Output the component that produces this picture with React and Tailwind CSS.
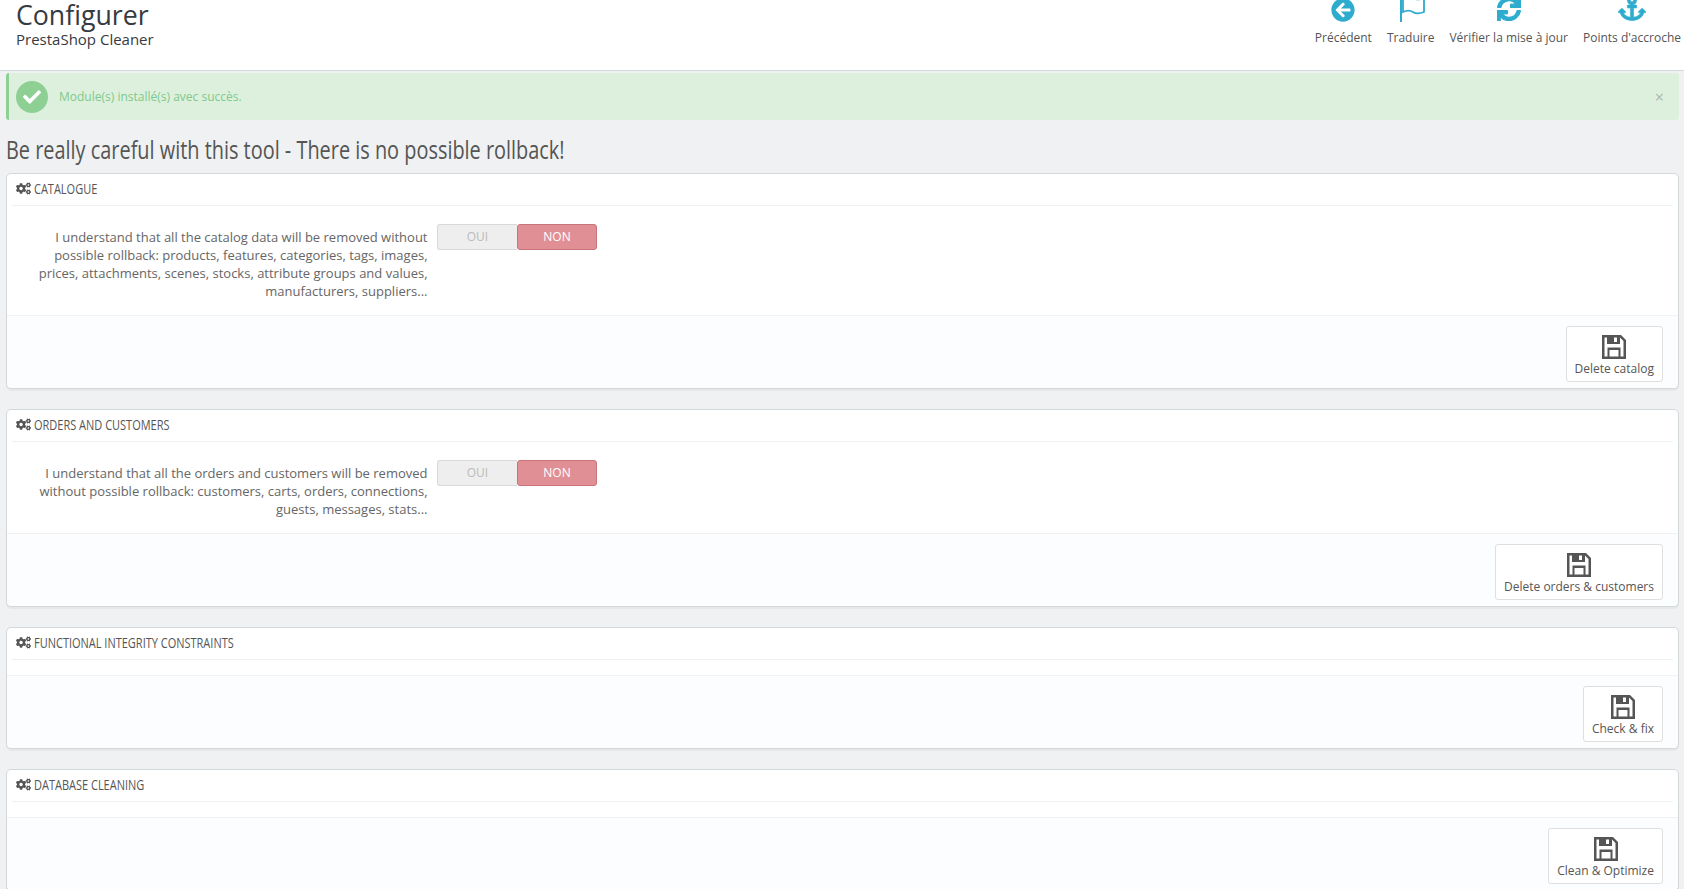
import { FaArrowCircleLeft, FaSync, FaAnchor, FaCogs, FaCheck } from 'react-icons/fa';

const sans = '[font-family:"Open_Sans",sans-serif]';

// floppy disk as in the toolbar buttons
const SaveIcon = () => (
  <svg width="26" height="26" viewBox="0 0 26 26" className="block text-[#555]">
    <path fillRule="evenodd" fill="currentColor" d="M1 1h19l5 5v19H1zM3.500 3.500v19h3v-9h13v9h3V7l-3.500-3.500V10H6V3.500zM8.500 16v6.500h9V16zM13 3.500V8h3V3.500z" />
  </svg>
);

const FlagIcon = () => (
  <svg width="28" height="28" viewBox="0 0 28 28" className="block text-[#2eacce] ml-[2px] -mr-[2px]">
    <path fill="currentColor" d="M1 1h2v27H1z" />
    <path fill="none" stroke="currentColor" strokeWidth="1.800" d="M4 4c4-2 7-2 10 0s6 2 11 0v14c-5 2-8 2-11 0s-6-2-10 0z" />
  </svg>
);

const ToolbarItem = ({ icon, label }) => (
  <div className="flex flex-col items-center text-[#555]">
    <div className="h-[27px] flex items-end text-[#2eacce]">{icon}</div>
    <span className="mt-[7px] text-[12px] leading-[18px] whitespace-nowrap">{label}</span>
  </div>
);

const Toggle = () => (
  <div className="flex w-[160px] h-[26px] shrink-0 text-[12px]">
    <div className="w-[80px] flex items-center justify-center bg-[#eeeeee] border border-[#d9d9d9] border-r-0 rounded-l-[3px] text-[#bbbbbb]">OUI</div>
    <div className="w-[80px] flex items-center justify-center bg-[#e08f95] border border-[#c9747b] rounded-[3px] text-white font-medium">NON</div>
  </div>
);

const Panel = ({ title, text, button }) => (
  <section className="mb-[20px] bg-white border border-[#d3d8db] rounded-[5px] shadow-[0_2px_0_rgba(0,0,0,0.04)]">
    <div className="mx-[5px] h-[32px] pb-[2px] flex items-center gap-[3px] px-[4px] border-b border-[#eff1f2] text-[#555]">
      <FaCogs className="text-[15px] shrink-0" />
      <h3 className="w-[300px] shrink-0 origin-left scale-x-[0.785] text-[14px] uppercase whitespace-nowrap">{title}</h3>
    </div>
    {text ? (
      <div className="pt-[18px] pb-[15px] flex items-start border-b border-[#eff1f2]">
        <p className="w-[421px] pl-[20px] pr-[0.5px] pt-[4px] text-right text-[13px] leading-[18px] text-[#666]">{text}</p>
        <div className="ml-[9px]"><Toggle /></div>
      </div>
    ) : (
      <div className="h-[16px] border-b border-[#eff1f2]" />
    )}
    <div className="h-[72px] pt-[10px] pr-[15px] flex justify-end bg-[#fcfdfe] rounded-b-[5px]">
      <button className="h-[56px] px-[8px] pt-[2px] flex flex-col items-center justify-center bg-white border border-[#dfdfdf] rounded-[3px] text-[12px] text-[#555]">
        <SaveIcon />
        <span className="leading-[16px] mt-[1px]">{button}</span>
      </button>
    </div>
  </section>
);

export default function App() {
  return (
    <div className={`${sans} h-[889px] overflow-hidden bg-[#eff1f2]`}>
      {/* Page head, scrolled a little out of view at the top */}
      <header className="h-[71px] bg-white border-b border-[#d3d8db] flex justify-between overflow-hidden">
        <div className="pl-[16px] pt-[1px] text-[#363a41]">
          <h1 className="text-[26.7px] leading-[28px]">Configurer</h1>
          <p className="text-[15px] leading-[20px]">PrestaShop Cleaner</p>
        </div>
        <div className="flex gap-[15px] pr-[3px] -mt-[5px]">
          <ToolbarItem label="Précédent" icon={<FaArrowCircleLeft size={24} />} />
          <ToolbarItem label="Traduire" icon={<FlagIcon />} />
          <ToolbarItem label="Vérifier la mise à jour" icon={<FaSync size={24} stroke="currentColor" strokeWidth={24} className="-translate-y-[1px]" />} />
          <ToolbarItem label="Points d'accroche" icon={<FaAnchor size={28} stroke="currentColor" strokeWidth={12} />} />
        </div>
      </header>

      <main className="pl-[6px] pr-[5px] pt-[2px]">
        <div className="h-[47px] flex items-center bg-[#ddf0de] border-l-[3px] border-[#8ed094] rounded-[3px] text-[#7fc98a] text-[12px]">
          <span className="ml-[7px] w-[32px] h-[32px] rounded-full bg-[#8ed094] flex items-center justify-center text-white">
            <FaCheck size={18} />
          </span>
          <span className="ml-[11px] flex-1">Module(s) installé(s) avec succès.</span>
          <span className="mr-[15px] text-[16px] leading-none text-[#a9b8ab]">×</span>
        </div>

        <h2 className="mt-[14px] mb-[9px] w-[700px] origin-left scale-x-[0.796] text-[25px] font-medium leading-[30px] text-[#555] whitespace-nowrap">
          Be really careful with this tool - There is no possible rollback!
        </h2>

        <Panel
          title="Catalogue"
          text="I understand that all the catalog data will be removed without possible rollback: products, features, categories, tags, images, prices, attachments, scenes, stocks, attribute groups and values, manufacturers, suppliers..."
          button="Delete catalog"
        />
        <Panel
          title="Orders and customers"
          text="I understand that all the orders and customers will be removed without possible rollback: customers, carts, orders, connections, guests, messages, stats..."
          button="Delete orders & customers"
        />
        <Panel title="Functional integrity constraints" button="Check & fix" />
        <Panel title="Database cleaning" button="Clean & Optimize" />
      </main>
    </div>
  );
}
